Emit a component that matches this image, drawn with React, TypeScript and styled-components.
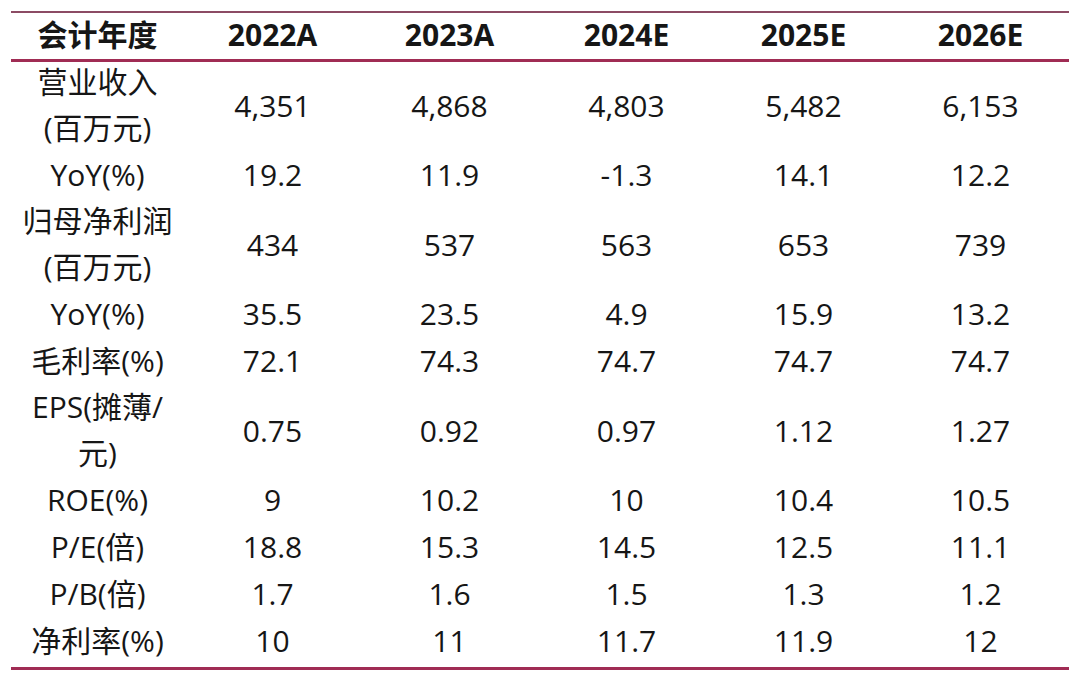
import React from "react"
import styled, { createGlobalStyle } from 'styled-components';

const GlobalStyle = createGlobalStyle`
  html, body {
    margin: 0;
    padding: 0;
    background: #ffffff;
  }
`;

type Row = { label: string[], values: string[] };

const years = ["2022A", "2023A", "2024E", "2025E", "2026E"];

const rows: Row[] = [
  { label: ["营业收入", "(百万元)"], values: ["4,351", "4,868", "4,803", "5,482", "6,153"] },
  { label: ["YoY(%)"], values: ["19.2", "11.9", "-1.3", "14.1", "12.2"] },
  { label: ["归母净利润", "(百万元)"], values: ["434", "537", "563", "653", "739"] },
  { label: ["YoY(%)"], values: ["35.5", "23.5", "4.9", "15.9", "13.2"] },
  { label: ["毛利率(%)"], values: ["72.1", "74.3", "74.7", "74.7", "74.7"] },
  { label: ["EPS(摊薄/", "元)"], values: ["0.75", "0.92", "0.97", "1.12", "1.27"] },
  { label: ["ROE(%)"], values: ["9", "10.2", "10", "10.4", "10.5"] },
  { label: ["P/E(倍)"], values: ["18.8", "15.3", "14.5", "12.5", "11.1"] },
  { label: ["P/B(倍)"], values: ["1.7", "1.6", "1.5", "1.3", "1.2"] },
  { label: ["净利率(%)"], values: ["10", "11", "11.7", "11.9", "12"] },
];

export default function App() {
  return (
    <Page>
      <GlobalStyle />
      <Table>
        <colgroup>
          <LabelCol />
          {years.map(y => <DataCol key={y} />)}
        </colgroup>
        <thead>
          <HeadRow>
            <HeadCell><Line $h={46} $lift={2}>会计年度</Line></HeadCell>
            {years.map(y => <HeadCell key={y}><Line $h={46} $lift={2}>{y}</Line></HeadCell>)}
          </HeadRow>
        </thead>
        <tbody>
          {rows.map((row, idx) => {
            const double = row.label.length > 1;
            return (
              <tr key={idx}>
                <Cell>
                  {row.label.map((line, i) => <Line key={i} $h={double ? 46 : 47}>{line}</Line>)}
                </Cell>
                {row.values.map((v, i) => <Cell key={i}><Line $h={47}>{v}</Line></Cell>)}
              </tr>
            );
          })}
        </tbody>
      </Table>
    </Page>
  );
};

const Page = styled.div`
  width: 1080px;
  height: 681px;
  padding: 11px 0 0 11px;
  box-sizing: border-box;
  background: #ffffff;
`;

const Table = styled.table`
  width: 1058px;
  border-collapse: collapse;
  table-layout: fixed;
  font-family: "Open Sans", "Noto Sans CJK SC", sans-serif;
  color: #161616;
  border-top: 2px solid #8c4b64;
  border-bottom: 3px solid #a02c54;
`;

const LabelCol = styled.col`
  width: 173px;
`;

const DataCol = styled.col`
  width: 177px;
`;

const HeadRow = styled.tr`
  border-bottom: 3px solid #a02c54;
`;

const HeadCell = styled.th`
  padding: 0;
  font-size: 30px;
  font-weight: 700;
  text-align: center;
  vertical-align: middle;
`;

const Cell = styled.td`
  padding: 0;
  font-size: 30px;
  font-weight: 400;
  text-align: center;
  vertical-align: middle;
  white-space: nowrap;
`;

const Line = styled.div<{ $h: number, $lift?: number }>`
  height: ${p => p.$h}px;
  line-height: ${p => p.$h - 6 + 2 * (p.$lift ?? 0)}px;
  overflow: visible;
`;
